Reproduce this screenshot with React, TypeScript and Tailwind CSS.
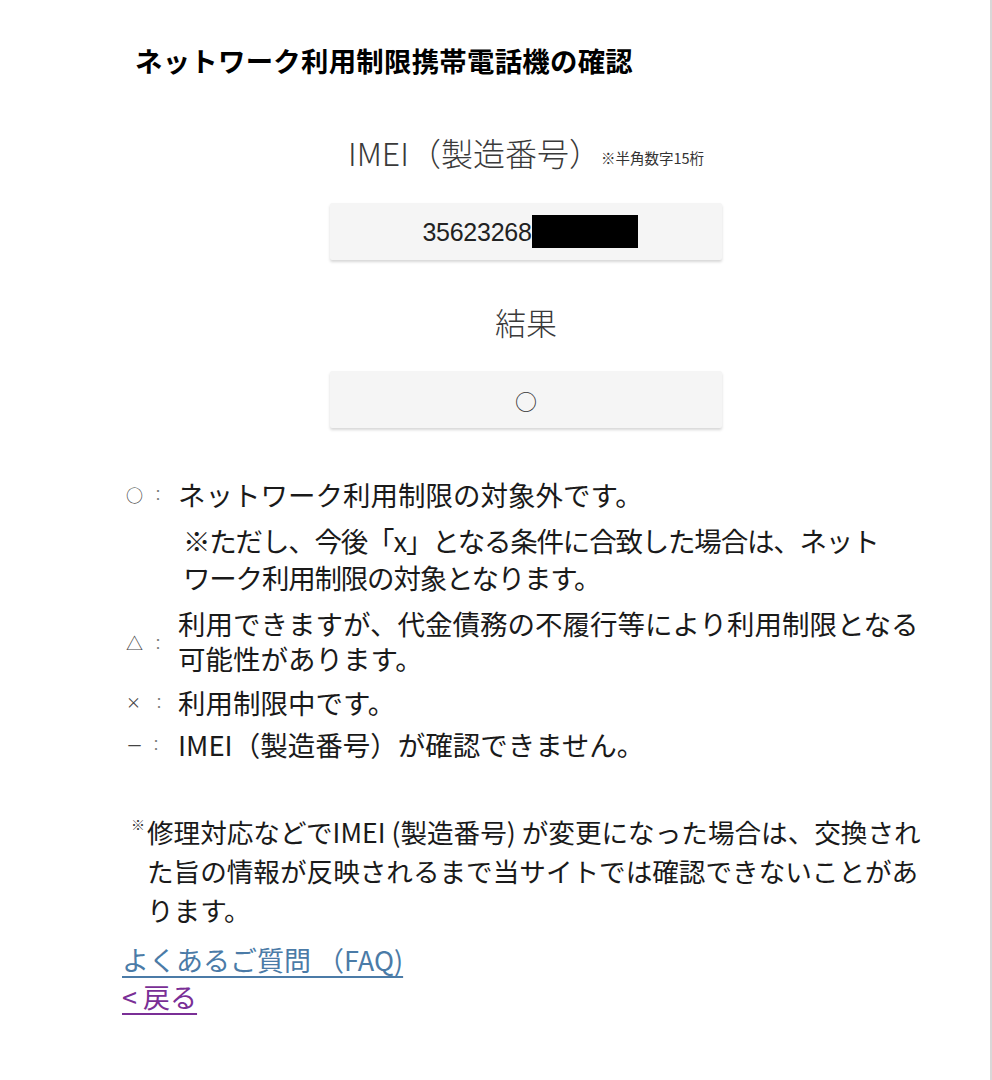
import React from "react";

const jp = { fontFamily: '"Noto Sans CJK JP", "Noto Sans", sans-serif' };

export default function App() {
  return (
    <div
      className="w-[992px] min-h-[1080px] bg-white border-r-2 border-[#d8d8d8] text-[#1a1a1a]"
      style={jp}
    >
      <div className="ml-[122px] w-[808px] pt-[40px]">
        <h1 className="pl-[13px] text-[27.4px] leading-[40px] font-bold text-black tracking-[0.01em]">
          ネットワーク利用制限携帯電話機の確認
        </h1>

        <div className="mt-[52px] flex items-end justify-center">
          <span className="text-[32px] leading-[40px] text-[#3a3a3a] font-light">IMEI（製造番号）</span>
          <span className="mb-[5px] text-[14.5px] leading-[18px] text-[#333]">※半角数字15桁</span>
        </div>

        <div className="mt-[31px] mx-auto w-[392px] h-[57px] bg-[#f5f5f5] rounded-[2px] shadow-[0_2px_3px_rgba(0,0,0,0.16)] flex items-center justify-center pl-[8px]">
          <span
            className="text-[25px] leading-[30px] text-[#222] tracking-[-0.01em]"
            style={{ fontFamily: '"Liberation Sans", Arial, sans-serif' }}
          >
            35623268
          </span>
          <span className="inline-block w-[106px] h-[33px] bg-black"></span>
        </div>

        <div className="mt-[42px] text-center text-[31px] leading-[40px] text-[#3a3a3a] font-light">結果</div>

        <div className="mt-[29px] mx-auto w-[392px] h-[57px] bg-[#f5f5f5] rounded-[2px] shadow-[0_2px_3px_rgba(0,0,0,0.16)] flex items-center justify-center">
          <span className="text-[22px] leading-[24px] text-[#333]">○</span>
        </div>

        <div className="mt-[48px] text-[27.5px]">
          <div className="flex items-start">
            <div className="w-[56px] h-[37px] flex items-center pl-[4px] text-[#444]">
              <span className="text-[17px]">○</span>
              <span className="ml-[8px] text-[14px] text-[#777]">：</span>
            </div>
            <div className="leading-[37px] whitespace-nowrap">ネットワーク利用制限の対象外です。</div>
          </div>
          <div className="mt-[9px] pl-[61px] leading-[37px] whitespace-nowrap tracking-[-1.2px]">
            <div>※ただし、今後「x」となる条件に合致した場合は、ネット</div>
            <div>ワーク利用制限の対象となります。</div>
          </div>

          <div className="mt-[10px] flex items-center">
            <div className="w-[56px] flex items-center pl-[4px] text-[#444] pt-[4px]">
              <span className="text-[17px]">△</span>
              <span className="ml-[8px] text-[14px] text-[#777]">：</span>
            </div>
            <div className="leading-[35px] whitespace-nowrap">
              <div>利用できますが、代金債務の不履行等により利用制限となる</div>
              <div>可能性があります。</div>
            </div>
          </div>

          <div className="mt-[10px] flex items-center">
            <div className="w-[56px] flex items-center pl-[4px] text-[#444]">
              <span className="text-[15px]">×</span>
              <span className="ml-[11px] text-[14px] text-[#777]">：</span>
            </div>
            <div className="leading-[33px] whitespace-nowrap">利用制限中です。</div>
          </div>

          <div className="mt-[9px] flex items-center">
            <div className="w-[56px] flex items-center pl-[4px] text-[#444]">
              <span className="text-[17px]">－</span>
              <span className="ml-[6px] text-[14px] text-[#777]">：</span>
            </div>
            <div className="leading-[33px] whitespace-nowrap">IMEI（製造番号）が確認できません。</div>
          </div>
        </div>

        <div className="mt-[51px] flex items-start text-[26.6px]">
          <div className="w-[25px] pl-[9px] pt-[4px] text-[14px] leading-[16px] text-[#333]">※</div>
          <div className="leading-[39px] whitespace-nowrap">
            <div>修理対応などでIMEI (製造番号) が変更になった場合は、交換され</div>
            <div>た旨の情報が反映されるまで当サイトでは確認できないことがあ</div>
            <div>ります。</div>
          </div>
        </div>

        <div className="mt-[12px] text-[27px] leading-[37px]">
          <a href="#" className="text-[#4b7ba7] underline underline-offset-[5px] decoration-[1.5px]">
            よくあるご質問 （FAQ)
          </a>
        </div>
        <div className="text-[27px] leading-[37px]">
          <a href="#" className="text-[#7a2f96] underline underline-offset-[5px] decoration-[1.5px]">
            &lt; 戻る
          </a>
        </div>
      </div>
    </div>
  );
}
